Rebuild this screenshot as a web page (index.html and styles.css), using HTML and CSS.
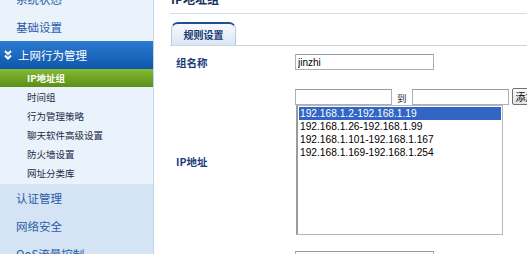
FILE: index.html
```html
<!DOCTYPE html>
<html lang="zh-CN">
<head>
    <meta charset="UTF-8">
    <meta name="viewport" content="width=device-width, initial-scale=1.0">
    <title>IP地址组</title>
    <link rel="stylesheet" href="styles.css">
</head>
<body>

<div class="page">
    <aside class="sidebar">
        <div class="menu-top">
            <div class="nav-item">系统状态</div>
            <div class="nav-item">基础设置</div>
            <div class="nav-item open">
                <svg class="chev" width="8" height="10" viewBox="0 0 8 10">
                    <path d="M1 1 L4 4 L7 1 M1 5.5 L4 8.5 L7 5.5" fill="none" stroke="#fff" stroke-width="2"/>
                </svg>
                上网行为管理
            </div>
            <ul class="sub-menu">
                <li class="current">IP地址组</li>
                <li>时间组</li>
                <li>行为管理策略</li>
                <li>聊天软件高级设置</li>
                <li>防火墙设置</li>
                <li>网址分类库</li>
            </ul>
        </div>
        <div class="nav-item">认证管理</div>
        <div class="nav-item">网络安全</div>
        <div class="nav-item">QoS流量控制</div>
    </aside>

    <main class="content">
        <div class="page-title">IP地址组</div>
        <div class="tabs">
            <div class="tab">规则设置</div>
        </div>

        <div class="form-row row-name">
            <div class="form-label">组名称</div>
            <input class="field name-field" type="text" value="jinzhi">
        </div>

        <div class="form-row row-ip">
            <div class="form-label">IP地址</div>
            <div class="ip-box">
                <div class="ip-inputs">
                    <input class="field ip-field" type="text">
                    <span class="to">到</span>
                    <input class="field ip-field" type="text">
                    <button class="btn">添加</button>
                </div>
                <div class="listbox">
                    <div class="option selected">192.168.1.2-192.168.1.19</div>
                    <div class="option">192.168.1.26-192.168.1.99</div>
                    <div class="option">192.168.1.101-192.168.1.167</div>
                    <div class="option">192.168.1.169-192.168.1.254</div>
                </div>
            </div>
        </div>

        <div class="form-row row-next">
            <div class="form-label"></div>
            <input class="field name-field" type="text">
        </div>
    </main>
</div>

</body>
</html>
```
FILE: styles.css
```css
body {
    margin: 0;
    font-family: "Noto Sans CJK SC", "Liberation Sans", sans-serif;
    background-color: #fff;
    overflow: hidden;
}
.page {
    display: flex;
    margin-top: -15px;
    height: 290px;
}
.sidebar {
    width: 153px;
    flex-shrink: 0;
    background-color: #d4e4f4;
    border-right: 1px solid #c3d6ea;
}
.menu-top {
    background-color: #eaf2fb;
}
.nav-item {
    height: 28px;
    line-height: 28px;
    padding-left: 16px;
    font-size: 11.5px;
    color: #2b5ba6;
}
.nav-item.open {
    display: flex;
    align-items: center;
    gap: 6px;
    padding-left: 4px;
    background: linear-gradient(#2b7bd2, #0f57aa);
    color: #fff;
}
.sub-menu {
    list-style: none;
    margin: 0;
    padding: 0 0 1px;
}
.sub-menu li {
    height: 19px;
    line-height: 19px;
    padding-left: 27px;
    font-size: 9.5px;
    color: #1d2b45;
}
.sub-menu li.current {
    height: 18px;
    line-height: 18px;
    margin-bottom: 1px;
    background: linear-gradient(#84ba34, #5b8f15);
    color: #fff;
    font-weight: bold;
}

.content {
    flex: 1;
    min-width: 0;
    padding-left: 16px;
}
.page-title {
    height: 28px;
    line-height: 28px;
    padding-left: 1px;
    border-bottom: 1px solid #d6dde7;
    font-size: 12px;
    font-weight: bold;
    color: #17325f;
}
.tabs {
    display: flex;
    margin-top: 8px;
    border-bottom: 1px solid #c9d5e3;
}
.tab {
    width: 63px;
    height: 21px;
    line-height: 21px;
    margin-left: 1px;
    text-align: center;
    font-size: 10px;
    font-weight: bold;
    color: #1b3770;
    border-top: 2px solid #1f5192;
    border-left: 1px solid #b9c9dd;
    border-right: 1px solid #b9c9dd;
    border-radius: 7px 7px 0 0;
    background: linear-gradient(#f7fafd, #d9e6f4);
}

.form-row {
    display: flex;
    align-items: center;
}
.form-label {
    width: 125px;
    flex-shrink: 0;
    padding-left: 6px;
    box-sizing: border-box;
    font-size: 10.5px;
    font-weight: bold;
    color: #1c3b7c;
}
.row-name {
    height: 32px;
}
.row-ip {
    padding: 10px 0 8px;
}
.row-next {
    padding-top: 8px;
}
.field {
    height: 16px;
    box-sizing: border-box;
    margin: 0;
    padding: 0 2px;
    font-family: "Liberation Sans", Arial, sans-serif;
    font-size: 10px;
    color: #000;
    border: 1px solid #a9b0b8;
    border-top-color: #959ca5;
    background: #fff;
}
.name-field {
    width: 139px;
    flex-shrink: 0;
}
.ip-box {
    display: flex;
    flex-direction: column;
    flex-shrink: 0;
}
.ip-inputs {
    display: flex;
    align-items: center;
    height: 17px;
}
.ip-field {
    width: 97px;
    flex-shrink: 0;
    margin-top: 1px;
}
.to {
    margin: 3px 5px 0;
    font-size: 9.5px;
    color: #333;
}
.btn {
    flex-shrink: 0;
    height: 17px;
    margin-left: 3px;
    padding: 0 3px;
    white-space: nowrap;
    font-size: 10px;
    font-family: "Noto Sans CJK SC", sans-serif;
    line-height: 14px;
    color: #000;
    background: linear-gradient(#fbfbfb, #e3e3e3);
    border: 1px solid #707070;
    border-radius: 2px;
}
.listbox {
    width: 207px;
    height: 130px;
    margin-left: 1px;
    box-sizing: border-box;
    padding: 1px 1px 0;
    border: 1px solid #b7b7b7;
    border-left: 2px solid #9c9c9c;
    font-family: "Liberation Sans", Arial, sans-serif;
    font-size: 10.2px;
    color: #000;
}
.option {
    height: 13px;
    line-height: 13px;
    padding-left: 1px;
}
.option.selected {
    background-color: #3366c3;
    color: #fff;
}
```
